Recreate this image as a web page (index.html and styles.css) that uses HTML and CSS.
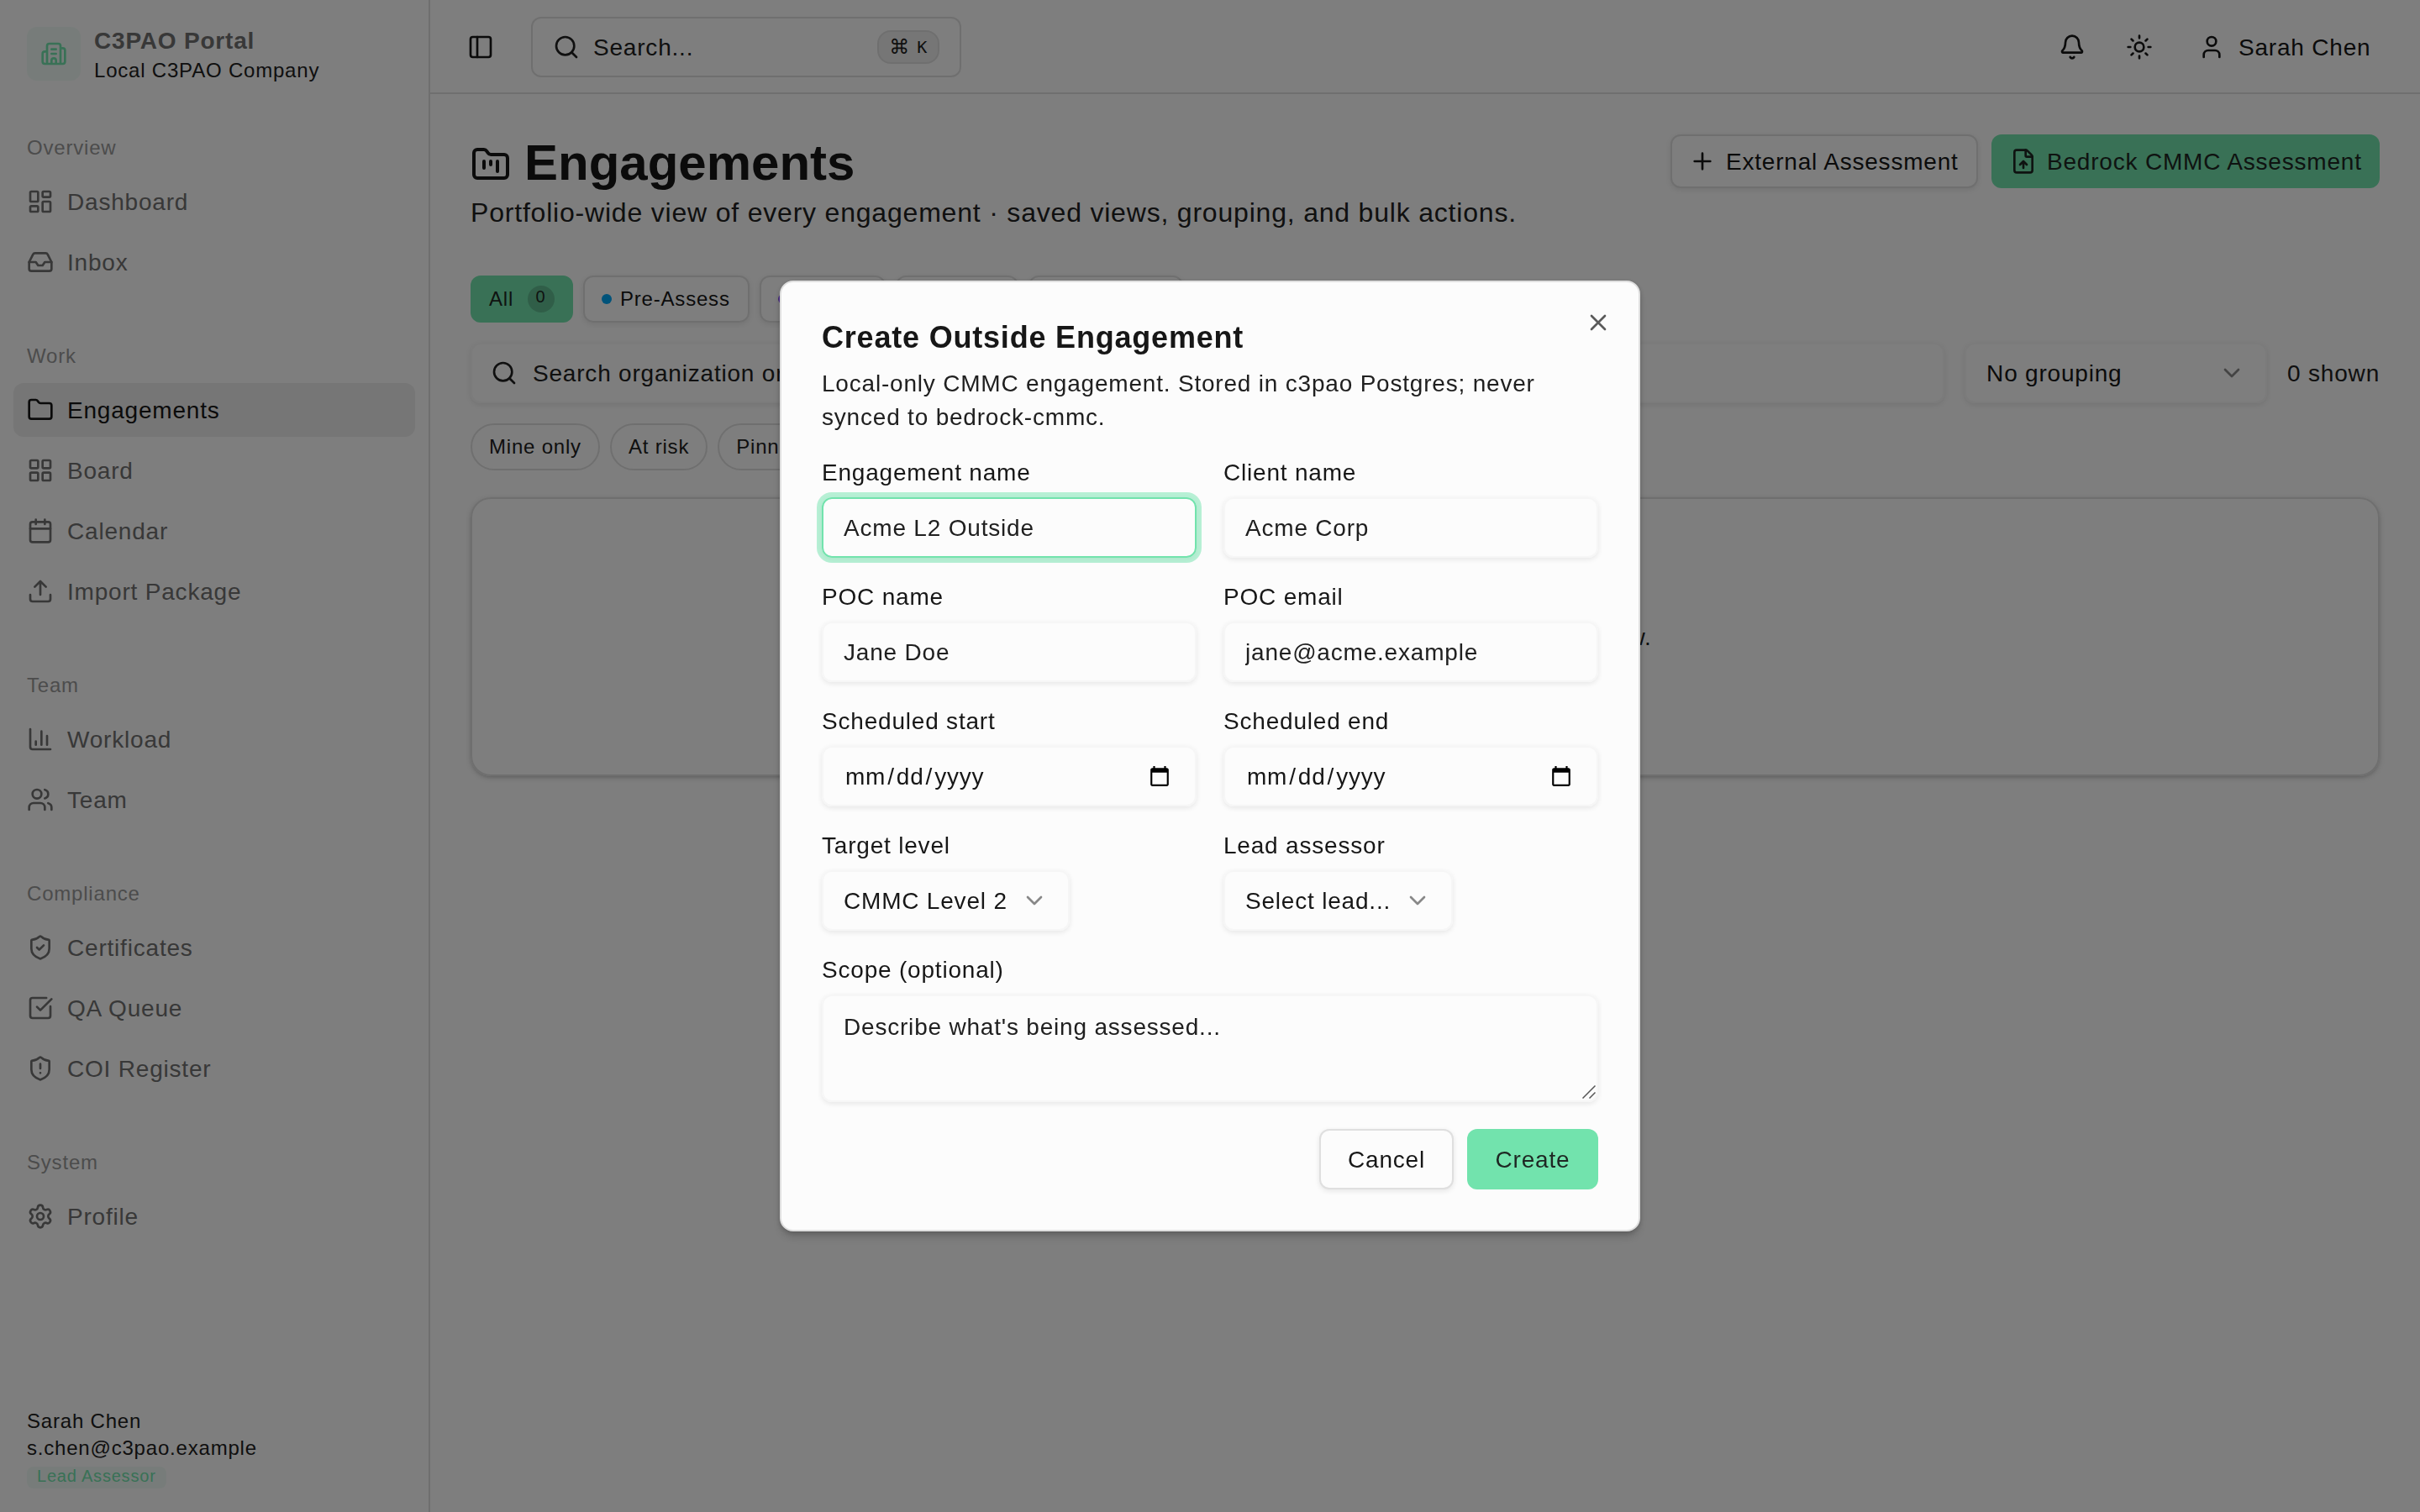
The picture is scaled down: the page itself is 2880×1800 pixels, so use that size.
FILE: index.html
```html
<!DOCTYPE html>
<html lang="en">

<head>
    <meta charset="UTF-8">
    <meta name="viewport" content="width=device-width, initial-scale=1.0">
    <title>Engagements - C3PAO Portal</title>
    <link rel="stylesheet" href="styles.css">
</head>

<body>

    <!-- icon set -->
    <svg class="sprite" xmlns="http://www.w3.org/2000/svg">
        <symbol id="i-building" viewBox="0 0 24 24"><path d="M10 12h4M10 8h4M14 21v-3a2 2 0 0 0-4 0v3M6 10H4a2 2 0 0 0-2 2v7a2 2 0 0 0 2 2h16a2 2 0 0 0 2-2V9a2 2 0 0 0-2-2h-2M6 21V5a2 2 0 0 1 2-2h8a2 2 0 0 1 2 2v16" /></symbol>
        <symbol id="i-dashboard" viewBox="0 0 24 24"><rect width="7" height="9" x="3" y="3" rx="1" /><rect width="7" height="5" x="14" y="3" rx="1" /><rect width="7" height="9" x="14" y="12" rx="1" /><rect width="7" height="5" x="3" y="16" rx="1" /></symbol>
        <symbol id="i-inbox" viewBox="0 0 24 24"><path d="M22 12h-6l-2 3h-4l-2-3H2" /><path d="M5.45 5.11 2 12v6a2 2 0 0 0 2 2h16a2 2 0 0 0 2-2v-6l-3.45-6.89A2 2 0 0 0 16.76 4H7.24a2 2 0 0 0-1.79 1.11z" /></symbol>
        <symbol id="i-folder" viewBox="0 0 24 24"><path d="M20 20a2 2 0 0 0 2-2V8a2 2 0 0 0-2-2h-7.9a2 2 0 0 1-1.69-.9L9.6 3.9A2 2 0 0 0 7.93 3H4a2 2 0 0 0-2 2v13a2 2 0 0 0 2 2Z" /></symbol>
        <symbol id="i-grid" viewBox="0 0 24 24"><rect width="7" height="7" x="3" y="3" rx="1" /><rect width="7" height="7" x="14" y="3" rx="1" /><rect width="7" height="7" x="14" y="14" rx="1" /><rect width="7" height="7" x="3" y="14" rx="1" /></symbol>
        <symbol id="i-calendar" viewBox="0 0 24 24"><path d="M8 2v4M16 2v4M3 10h18" /><rect width="18" height="18" x="3" y="4" rx="2" /></symbol>
        <symbol id="i-upload" viewBox="0 0 24 24"><path d="M12 3v12M17 8l-5-5-5 5M21 15v4a2 2 0 0 1-2 2H5a2 2 0 0 1-2-2v-4" /></symbol>
        <symbol id="i-chart" viewBox="0 0 24 24"><path d="M3 3v16a2 2 0 0 0 2 2h16M18 17V9M13 17V5M8 17v-3" /></symbol>
        <symbol id="i-users" viewBox="0 0 24 24"><path d="M16 21v-2a4 4 0 0 0-4-4H6a4 4 0 0 0-4 4v2" /><circle cx="9" cy="7" r="4" /><path d="M16 3.128a4 4 0 0 1 0 7.744M22 21v-2a4 4 0 0 0-3-3.87" /></symbol>
        <symbol id="i-shield-check" viewBox="0 0 24 24"><path d="M20 13c0 5-3.5 7.5-7.66 8.95a1 1 0 0 1-.67-.01C7.5 20.5 4 18 4 13V6a1 1 0 0 1 1-1c2 0 4.5-1.2 6.24-2.72a1.17 1.17 0 0 1 1.52 0C14.51 3.81 17 5 19 5a1 1 0 0 1 1 1z" /><path d="m9 12 2 2 4-4" /></symbol>
        <symbol id="i-square-check" viewBox="0 0 24 24"><path d="M21 10.656V19a2 2 0 0 1-2 2H5a2 2 0 0 1-2-2V5a2 2 0 0 1 2-2h12.344" /><path d="m9 11 3 3L22 4" /></symbol>
        <symbol id="i-shield-alert" viewBox="0 0 24 24"><path d="M20 13c0 5-3.5 7.5-7.66 8.95a1 1 0 0 1-.67-.01C7.5 20.5 4 18 4 13V6a1 1 0 0 1 1-1c2 0 4.5-1.2 6.24-2.72a1.17 1.17 0 0 1 1.52 0C14.51 3.81 17 5 19 5a1 1 0 0 1 1 1z" /><path d="M12 8v4M12 16h.01" /></symbol>
        <symbol id="i-settings" viewBox="0 0 24 24"><path d="M9.671 4.136a2.34 2.34 0 0 1 4.659 0 2.34 2.34 0 0 0 3.319 1.915 2.34 2.34 0 0 1 2.33 4.033 2.34 2.34 0 0 0 0 3.831 2.34 2.34 0 0 1-2.33 4.033 2.34 2.34 0 0 0-3.319 1.915 2.34 2.34 0 0 1-4.659 0 2.34 2.34 0 0 0-3.32-1.915 2.34 2.34 0 0 1-2.33-4.033 2.34 2.34 0 0 0 0-3.831A2.34 2.34 0 0 1 6.35 6.051a2.34 2.34 0 0 0 3.319-1.915" /><circle cx="12" cy="12" r="3" /></symbol>
        <symbol id="i-panel" viewBox="0 0 24 24"><rect width="18" height="18" x="3" y="3" rx="2" /><path d="M9 3v18" /></symbol>
        <symbol id="i-search" viewBox="0 0 24 24"><path d="m21 21-4.34-4.34" /><circle cx="11" cy="11" r="8" /></symbol>
        <symbol id="i-bell" viewBox="0 0 24 24"><path d="M10.268 21a2 2 0 0 0 3.464 0" /><path d="M3.262 15.326A1 1 0 0 0 4 17h16a1 1 0 0 0 .74-1.673C19.41 13.956 18 12.499 18 8A6 6 0 0 0 6 8c0 4.499-1.411 5.956-2.738 7.326" /></symbol>
        <symbol id="i-sun" viewBox="0 0 24 24"><circle cx="12" cy="12" r="4" /><path d="M12 2v2M12 20v2M4.93 4.93l1.41 1.41M17.66 17.66l1.41 1.41M2 12h2M20 12h2M6.34 17.66l-1.41 1.41M19.07 4.93l-1.41 1.41" /></symbol>
        <symbol id="i-user" viewBox="0 0 24 24"><path d="M19 21v-2a4 4 0 0 0-4-4H9a4 4 0 0 0-4 4v2" /><circle cx="12" cy="7" r="4" /></symbol>
        <symbol id="i-kanban" viewBox="0 0 24 24"><path d="M4 20h16a2 2 0 0 0 2-2V8a2 2 0 0 0-2-2h-7.93a2 2 0 0 1-1.66-.9l-.82-1.2A2 2 0 0 0 7.93 3H4a2 2 0 0 0-2 2v13c0 1.1.9 2 2 2ZM8 10v4M12 10v2M16 10v6" /></symbol>
        <symbol id="i-plus" viewBox="0 0 24 24"><path d="M5 12h14M12 5v14" /></symbol>
        <symbol id="i-file-up" viewBox="0 0 24 24"><path d="M6 22a2 2 0 0 1-2-2V4a2 2 0 0 1 2-2h8a2.4 2.4 0 0 1 1.704.706l3.588 3.588A2.4 2.4 0 0 1 20 8v12a2 2 0 0 1-2 2z" /><path d="M14 2v5a1 1 0 0 0 1 1h5M12 12v6M15 15l-3-3-3 3" /></symbol>
        <symbol id="i-chevron" viewBox="0 0 24 24"><path d="m6 9 6 6 6-6" /></symbol>
        <symbol id="i-x" viewBox="0 0 24 24"><path d="M18 6 6 18M6 6l12 12" /></symbol>
    </svg>

    <div class="app">

        <!-- Sidebar -->
        <aside class="sidebar">
            <div class="brand">
                <div class="brand-logo"><svg class="icon"><use href="#i-building" /></svg></div>
                <div class="brand-text">
                    <div class="brand-name">C3PAO Portal</div>
                    <div class="brand-company">Local C3PAO Company</div>
                </div>
            </div>

            <nav class="nav">
                <div class="nav-group">
                    <div class="nav-label">Overview</div>
                    <a class="nav-item"><svg class="icon"><use href="#i-dashboard" /></svg>Dashboard</a>
                    <a class="nav-item"><svg class="icon"><use href="#i-inbox" /></svg>Inbox</a>
                </div>
                <div class="nav-group">
                    <div class="nav-label">Work</div>
                    <a class="nav-item active"><svg class="icon"><use href="#i-folder" /></svg>Engagements</a>
                    <a class="nav-item"><svg class="icon"><use href="#i-grid" /></svg>Board</a>
                    <a class="nav-item"><svg class="icon"><use href="#i-calendar" /></svg>Calendar</a>
                    <a class="nav-item"><svg class="icon"><use href="#i-upload" /></svg>Import Package</a>
                </div>
                <div class="nav-group">
                    <div class="nav-label">Team</div>
                    <a class="nav-item"><svg class="icon"><use href="#i-chart" /></svg>Workload</a>
                    <a class="nav-item"><svg class="icon"><use href="#i-users" /></svg>Team</a>
                </div>
                <div class="nav-group">
                    <div class="nav-label">Compliance</div>
                    <a class="nav-item"><svg class="icon"><use href="#i-shield-check" /></svg>Certificates</a>
                    <a class="nav-item"><svg class="icon"><use href="#i-square-check" /></svg>QA Queue</a>
                    <a class="nav-item"><svg class="icon"><use href="#i-shield-alert" /></svg>COI Register</a>
                </div>
                <div class="nav-group">
                    <div class="nav-label">System</div>
                    <a class="nav-item"><svg class="icon"><use href="#i-settings" /></svg>Profile</a>
                </div>
            </nav>

            <div class="sidebar-footer">
                <div>Sarah Chen</div>
                <div>s.chen@c3pao.example</div>
                <span class="role">Lead Assessor</span>
            </div>
        </aside>

        <div class="main">

            <!-- Top bar -->
            <header class="topbar">
                <button class="icon-btn"><svg class="icon"><use href="#i-panel" /></svg></button>
                <div class="global-search">
                    <svg class="icon"><use href="#i-search" /></svg>
                    <span>Search...</span>
                    <kbd><span class="cmd">⌘</span>K</kbd>
                </div>
                <div class="topbar-right">
                    <button class="icon-btn"><svg class="icon"><use href="#i-bell" /></svg></button>
                    <button class="icon-btn"><svg class="icon"><use href="#i-sun" /></svg></button>
                    <button class="user-btn"><svg class="icon"><use href="#i-user" /></svg>Sarah Chen</button>
                </div>
            </header>

            <!-- Engagements page -->
            <main class="page">
                <div class="page-head">
                    <div>
                        <h1><svg class="icon icon-lg"><use href="#i-kanban" /></svg>Engagements</h1>
                        <p class="subtitle">Portfolio-wide view of every engagement · saved views, grouping, and bulk actions.</p>
                    </div>
                    <div class="page-actions">
                        <button class="btn btn-sm btn-outline btn-external"><svg class="icon"><use href="#i-plus" /></svg>External Assessment</button>
                        <button class="btn btn-sm btn-primary btn-bedrock"><svg class="icon"><use href="#i-file-up" /></svg>Bedrock CMMC Assessment</button>
                    </div>
                </div>

                <div class="tabs">
                    <button class="tab tab-all">All <span class="count">0</span></button>
                    <button class="tab tab-pre"><i class="dot dot-blue"></i>Pre-Assess</button>
                    <button class="tab tab-assess"><i class="dot dot-violet"></i>Assess</button>
                    <button class="tab tab-report"><i class="dot dot-amber"></i>Report</button>
                    <button class="tab tab-cert"><i class="dot dot-green"></i>Certificate</button>
                </div>

                <div class="filters">
                    <div class="field filter-search">
                        <svg class="icon"><use href="#i-search" /></svg>
                        <span>Search organization or client</span>
                    </div>
                    <div class="field select filter-group">No grouping<svg class="icon"><use href="#i-chevron" /></svg></div>
                    <div class="shown">0 shown</div>
                </div>

                <div class="chips">
                    <button class="chip">Mine only</button>
                    <button class="chip">At risk</button>
                    <button class="chip">Pinned</button>
                </div>

                <div class="empty-card">No engagements match the current view.</div>
            </main>
        </div>
    </div>

    <!-- Create engagement dialog -->
    <div class="overlay">
        <form class="dialog">
            <button type="button" class="dialog-close"><svg class="icon"><use href="#i-x" /></svg></button>
            <div class="dialog-head">
                <h2>Create Outside Engagement</h2>
                <p>Local-only CMMC engagement. Stored in c3pao Postgres; never synced to bedrock-cmmc.</p>
            </div>

            <div class="form-grid">
                <div class="form-item">
                    <label for="eng-name">Engagement name</label>
                    <input class="field focused" type="text" id="eng-name" placeholder="Acme L2 Outside">
                </div>
                <div class="form-item">
                    <label for="client-name">Client name</label>
                    <input class="field" type="text" id="client-name" placeholder="Acme Corp">
                </div>
                <div class="form-item">
                    <label for="poc-name">POC name</label>
                    <input class="field" type="text" id="poc-name" placeholder="Jane Doe">
                </div>
                <div class="form-item">
                    <label for="poc-email">POC email</label>
                    <input class="field" type="email" id="poc-email" placeholder="jane@acme.example">
                </div>
                <div class="form-item">
                    <label for="start">Scheduled start</label>
                    <input class="field" type="date" id="start">
                </div>
                <div class="form-item">
                    <label for="end">Scheduled end</label>
                    <input class="field" type="date" id="end">
                </div>
                <div class="form-item">
                    <label>Target level</label>
                    <div class="field select">CMMC Level 2<svg class="icon"><use href="#i-chevron" /></svg></div>
                </div>
                <div class="form-item">
                    <label>Lead assessor</label>
                    <div class="field select">Select lead...<svg class="icon"><use href="#i-chevron" /></svg></div>
                </div>
                <div class="form-item wide">
                    <label for="scope">Scope (optional)</label>
                    <div class="textarea-wrap">
                        <textarea class="field" id="scope" placeholder="Describe what's being assessed..."></textarea>
                        <svg class="grip" viewBox="0 0 16 16"><path d="M.5 15.5l15-15M8.5 15.5l7-7" /></svg>
                    </div>
                </div>
            </div>

            <div class="dialog-foot">
                <button type="button" class="btn btn-outline">Cancel</button>
                <button type="button" class="btn btn-primary btn-create">Create</button>
            </div>
        </form>
    </div>

</body>

</html>
```
FILE: styles.css
```css
* {
    margin: 0;
    padding: 0;
    box-sizing: border-box;
}

:root {
    --bg: #fcfcfc;
    --text: #171717;
    --muted: #202020;
    --border: #dfdfdf;
    --input: #f6f6f6;
    --accent: #ededed;
    --primary: #72e3ad;
    --primary-text: #1e2723;
    --sidebar-text: #707070;
    --shadow-xs: 0 2px 6px 0 rgba(0, 0, 0, 0.09);
    --shadow-sm: 0 2px 6px 0 rgba(0, 0, 0, 0.17), 0 2px 4px -2px rgba(0, 0, 0, 0.17);
    --shadow-lg: 0 2px 6px 0 rgba(0, 0, 0, 0.17), 0 8px 12px -2px rgba(0, 0, 0, 0.17);
}

body {
    font-family: "Liberation Sans", Arial, sans-serif;
    font-size: 28px;
    line-height: 40px;
    letter-spacing: 0.8px;
    background: var(--bg);
    color: var(--text);
    overflow: hidden;
}

button,
input,
textarea {
    font: inherit;
    letter-spacing: inherit;
    color: inherit;
    background: none;
    border: none;
    outline: none;
}

.sprite {
    display: none;
}

.icon {
    width: 32px;
    height: 32px;
    flex-shrink: 0;
    fill: none;
    stroke: currentColor;
    stroke-width: 2;
    stroke-linecap: round;
    stroke-linejoin: round;
}

.icon-lg {
    width: 48px;
    height: 48px;
    margin-top: 5px;
}

.app {
    display: flex;
    height: 1800px;
}

/* Sidebar */
.sidebar {
    width: 512px;
    flex-shrink: 0;
    display: flex;
    flex-direction: column;
    border-right: 2px solid var(--border);
    color: var(--sidebar-text);
}

.brand {
    display: flex;
    align-items: center;
    gap: 16px;
    height: 128px;
    padding: 0 32px;
}

.brand-logo {
    display: flex;
    align-items: center;
    justify-content: center;
    width: 64px;
    height: 64px;
    border-radius: 12px;
    background: rgba(114, 227, 173, 0.1);
    color: var(--primary);
}

.brand-text {
    padding-top: 4px;
}

.brand-name {
    font-weight: bold;
    line-height: 36px;
}

.brand-company {
    font-size: 24px;
    line-height: 34px;
    color: var(--muted);
}

.nav {
    flex: 1;
    display: flex;
    flex-direction: column;
    gap: 16px;
}

.nav-group {
    display: flex;
    flex-direction: column;
    gap: 8px;
    padding: 16px;
}

.nav-label {
    height: 64px;
    margin-bottom: -8px;
    padding: 0 16px;
    font-size: 24px;
    line-height: 64px;
    opacity: 0.7;
}

.nav-item {
    display: flex;
    align-items: center;
    gap: 16px;
    height: 64px;
    padding: 2px 16px 0;
    border-radius: 12px;
}

.nav-item.active {
    background: var(--accent);
    color: var(--text);
}

.sidebar-footer {
    padding: 0 32px 28px;
    font-size: 24px;
    line-height: 32px;
    color: var(--muted);
}

.role {
    display: block;
    width: fit-content;
    height: 26px;
    margin-top: 6px;
    padding: 0 12px;
    border-radius: 8px;
    background: rgba(114, 227, 173, 0.1);
    color: var(--primary);
    font-size: 20px;
    line-height: 22px;
}

/* Top bar */
.main {
    flex: 1;
    min-width: 0;
}

.topbar {
    display: flex;
    align-items: center;
    height: 112px;
    padding: 2px 32px 0 24px;
    border-bottom: 2px solid var(--border);
}

.icon-btn {
    display: flex;
    align-items: center;
    justify-content: center;
    width: 72px;
    height: 72px;
}

.global-search {
    display: flex;
    align-items: center;
    gap: 16px;
    width: 512px;
    height: 72px;
    margin-left: 24px;
    padding: 2px 24px 0;
    border: 2px solid var(--border);
    border-radius: 12px;
    color: var(--muted);
}

kbd {
    display: flex;
    align-items: center;
    gap: 8px;
    height: 40px;
    margin-left: auto;
    padding: 0 12px;
    border: 2px solid var(--border);
    border-radius: 16px;
    background: var(--accent);
    font-family: "DejaVu Sans Mono", monospace;
    font-size: 20px;
}

.cmd {
    font-family: "DejaVu Sans", sans-serif;
    font-size: 24px;
}

.topbar-right {
    display: flex;
    gap: 8px;
    margin-left: auto;
}

.user-btn {
    display: flex;
    align-items: center;
    gap: 16px;
    width: 258px;
    padding: 2px 0 0 26px;
    white-space: nowrap;
}

/* Page */
.page {
    padding: 48px;
}

.page-head {
    display: flex;
    justify-content: space-between;
    align-items: flex-start;
    height: 168px;
}

h1 {
    display: flex;
    align-items: center;
    gap: 16px;
    height: 69px;
    padding-bottom: 2px;
    font-size: 60px;
    line-height: 67px;
    letter-spacing: 0;
}

.subtitle {
    font-size: 32px;
    line-height: 48px;
    color: var(--muted);
}

.page-actions {
    display: flex;
    gap: 16px;
}

.btn {
    display: flex;
    align-items: center;
    justify-content: center;
    gap: 12px;
    height: 72px;
    padding: 2px 32px 0;
    border: 2px solid transparent;
    border-radius: 12px;
    white-space: nowrap;
}

.btn-sm {
    height: 64px;
    padding: 2px 0 0 20px;
    justify-content: flex-start;
}

.btn-outline {
    border-color: var(--border);
    background: var(--bg);
    box-shadow: var(--shadow-xs);
}

.btn-primary {
    background: var(--primary) border-box;
    color: var(--primary-text);
}

.btn-external {
    width: 366px;
}

.btn-bedrock {
    width: 462px;
}

.btn-create {
    width: 156px;
}

/* keep icons on the row's true centre */
.nav-item .icon,
.global-search .icon,
.user-btn .icon,
.btn .icon,
.field .icon,
kbd {
    margin-top: -2px;
}

.tabs {
    display: flex;
    gap: 12px;
}

.tab {
    display: flex;
    align-items: center;
    gap: 10px;
    height: 56px;
    padding: 0 20px;
    border: 2px solid var(--border);
    border-radius: 12px;
    font-size: 24px;
    box-shadow: var(--shadow-xs);
}

.tab-all {
    justify-content: space-between;
    width: 122px;
    border-color: transparent;
    background: var(--primary) border-box;
    color: var(--primary-text);
    box-shadow: none;
}

.tab-pre {
    width: 198px;
}

.tab-assess {
    width: 150px;
}

.tab-report {
    width: 146px;
}

.tab-cert {
    width: 184px;
}

.count {
    width: 32px;
    height: 32px;
    padding-right: 1px;
    border-radius: 50%;
    background: rgba(30, 39, 35, 0.2);
    font-size: 20px;
    line-height: 26px;
    text-align: center;
}

.dot {
    width: 12px;
    height: 12px;
    flex-shrink: 0;
    border-radius: 50%;
}

.dot-blue {
    background: #00a6f4;
}

.dot-violet {
    background: #8e51ff;
}

.dot-amber {
    background: #fe9a00;
}

.dot-green {
    background: #00bc7d;
}

.filters {
    display: flex;
    align-items: center;
    gap: 24px;
    margin-top: 24px;
}

.field {
    height: 72px;
    padding: 2px 24px 0;
    border: 2px solid var(--input);
    border-radius: 12px;
    box-shadow: var(--shadow-xs);
}

.filter-search {
    flex: 1;
    display: flex;
    align-items: center;
    gap: 18px;
    padding: 2px 22px 0;
    color: var(--muted);
}

.select {
    display: flex;
    align-items: center;
    justify-content: space-between;
    gap: 16px;
    width: fit-content;
}

.select .icon {
    opacity: 0.5;
}

.filter-group {
    width: 360px;
}

.shown {
    padding-top: 2px;
    color: var(--muted);
}

.chips {
    display: flex;
    gap: 12px;
    margin-top: 24px;
}

.chip {
    height: 56px;
    padding: 0 20px;
    border: 2px solid var(--border);
    border-radius: 28px;
    font-size: 24px;
    color: var(--muted);
}

.empty-card {
    display: flex;
    align-items: center;
    justify-content: center;
    height: 332px;
    margin-top: 32px;
    padding-top: 2px;
    border: 2px solid var(--border);
    border-radius: 24px;
    color: var(--muted);
    box-shadow: var(--shadow-sm);
}

/* Dialog */
.overlay {
    position: fixed;
    inset: 0;
    display: flex;
    align-items: center;
    justify-content: center;
    background: rgba(0, 0, 0, 0.5);
}

.dialog {
    position: relative;
    display: flex;
    flex-direction: column;
    gap: 32px;
    width: 1024px;
    padding: 48px;
    border: 2px solid var(--border);
    border-radius: 16px;
    background: var(--bg);
    box-shadow: var(--shadow-lg);
}

.dialog-close {
    position: absolute;
    top: 32px;
    right: 32px;
    height: 32px;
    opacity: 0.7;
}

.dialog-close .icon {
    display: block;
}

.dialog-head {
    display: flex;
    flex-direction: column;
    gap: 17px;
    margin-bottom: -1px;
}

.dialog-head h2 {
    font-size: 36px;
    line-height: 36px;
}

.dialog-head p {
    color: var(--muted);
}

.form-grid {
    display: grid;
    grid-template-columns: 1fr 1fr;
    gap: 32px;
}

.form-item {
    display: flex;
    flex-direction: column;
    gap: 14px;
    min-width: 0;
}

.form-item label {
    line-height: 30px;
}

.wide {
    grid-column: span 2;
}

.field::placeholder {
    color: var(--muted);
    opacity: 1;
}

.field.focused {
    border-color: var(--primary);
    box-shadow: 0 0 0 6px rgba(114, 227, 173, 0.5), var(--shadow-xs);
}

/* native date input parts */
.field::-webkit-datetime-edit-month-field,
.field::-webkit-datetime-edit-day-field,
.field::-webkit-datetime-edit-year-field {
    padding: 0 2px;
}

.field::-webkit-calendar-picker-indicator {
    margin-right: 2px;
}

.textarea-wrap {
    position: relative;
    display: flex;
}

textarea.field {
    width: 100%;
    height: 128px;
    padding: 17px 24px;
    resize: none;
}

.grip {
    position: absolute;
    right: 3px;
    bottom: 4px;
    width: 16px;
    height: 16px;
    fill: none;
    stroke: #555;
    stroke-width: 1.5;
}

.dialog-foot {
    display: flex;
    justify-content: flex-end;
    gap: 16px;
}
```
